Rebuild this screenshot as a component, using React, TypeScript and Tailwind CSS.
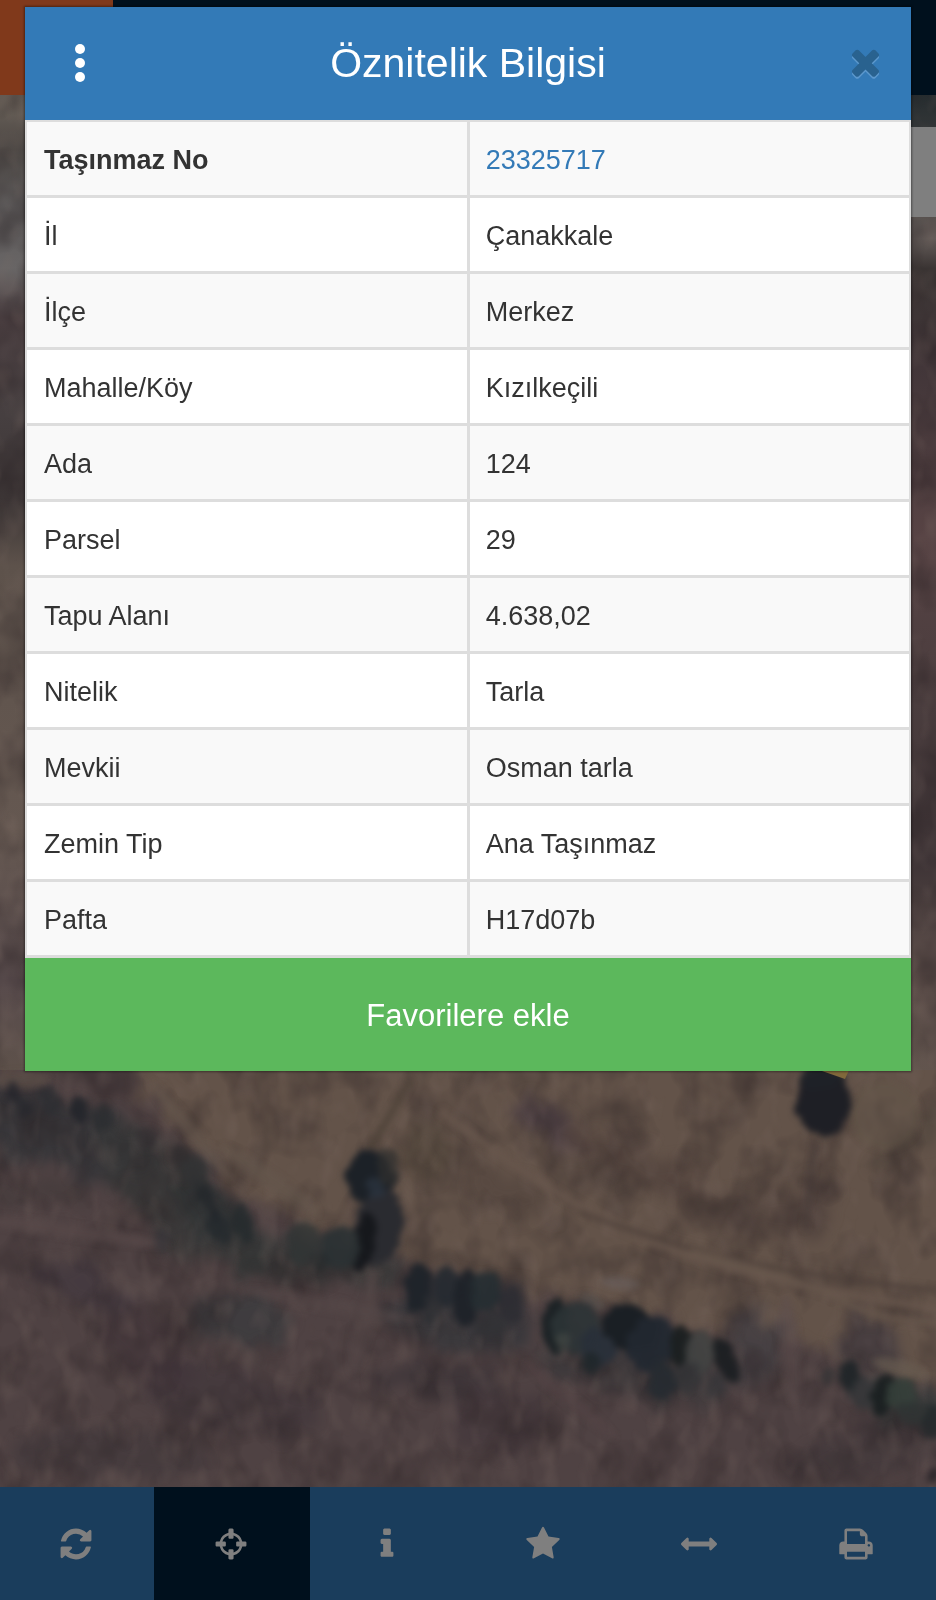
const rows: [string, string][] = [
  ["Taşınmaz No", "23325717"],
  ["İl", "Çanakkale"],
  ["İlçe", "Merkez"],
  ["Mahalle/Köy", "Kızılkeçili"],
  ["Ada", "124"],
  ["Parsel", "29"],
  ["Tapu Alanı", "4.638,02"],
  ["Nitelik", "Tarla"],
  ["Mevkii", "Osman tarla"],
  ["Zemin Tip", "Ana Taşınmaz"],
  ["Pafta", "H17d07b"],
];

const tools = [
  {
    label: "Yenile",
    d: "M1639 1056q0 5-1 7-64 268-268 434.5t-478 166.5q-146 0-282.5-55t-243.5-157l-129 129q-19 19-45 19t-45-19-19-45v-448q0-26 19-45t45-19h448q26 0 45 19t19 45-19 45l-137 137q71 66 161 102t187 36q134 0 250-65t186-179q11-17 53-117 8-23 30-23h192q13 0 22.5 9.5t9.5 22.5zm25-800v448q0 26-19 45t-45 19h-448q-26 0-45-19t-19-45 19-45l138-138q-148-137-349-137-134 0-250 65t-186 179q-11 17-53 117-8 23-30 23h-199q-13 0-22.5-9.5t-9.5-22.5v-7q65-268 270-434.5t480-166.5q146 0 284 55.5t245 156.5l130-129q19-19 45-19t45 19 19 45z",
  },
  {
    label: "Konum",
    active: true,
    d: "M1325 1024h-109q-26 0-45-19t-19-45v-128q0-26 19-45t45-19h109q-32-108-112.5-188.5t-188.5-112.5v109q0 26-19 45t-45 19h-128q-26 0-45-19t-19-45v-109q-108 32-188.5 112.5t-112.5 188.5h109q26 0 45 19t19 45v128q0 26-19 45t-45 19h-109q32 108 112.5 188.5t188.5 112.5v-109q0-26 19-45t45-19h128q26 0 45 19t19 45v109q108-32 188.5-112.5t112.5-188.5zm339-192v128q0 26-19 45t-45 19h-143q-37 161-154.5 278.5t-278.5 154.5v143q0 26-19 45t-45 19h-128q-26 0-45-19t-19-45v-143q-161-37-278.5-154.5t-154.5-278.5h-143q-26 0-45-19t-19-45v-128q0-26 19-45t45-19h143q37-161 154.5-278.5t278.5-154.5v-143q0-26 19-45t45-19h128q26 0 45 19t19 45v143q161 37 278.5 154.5t154.5 278.5h143q26 0 45 19t19 45z",
  },
  {
    label: "Bilgi",
    d: "M1216 1344v128q0 26-19 45t-45 19h-512q-26 0-45-19t-19-45v-128q0-26 19-45t45-19h64v-384h-64q-26 0-45-19t-19-45v-128q0-26 19-45t45-19h384q26 0 45 19t19 45v576h64q26 0 45 19t19 45zm-128-1152v192q0 26-19 45t-45 19h-256q-26 0-45-19t-19-45v-192q0-26 19-45t45-19h256q26 0 45 19t19 45z",
  },
  {
    label: "Favoriler",
    d: "M1728 647q0 22-26 48l-363 354 86 500q1 7 1 20 0 21-10.5 35.5t-30.5 14.5q-19 0-40-12l-449-236-449 236q-22 12-40 12-21 0-31.5-14.5t-10.5-35.5q0-6 2-20l86-500-364-354q-25-27-25-48 0-37 56-46l502-73 225-455q19-41 49-41t49 41l225 455 502 73q56 9 56 46z",
  },
  {
    label: "Ölçüm",
    d: "M1792 896q0 26-19 45l-256 256q-19 19-45 19t-45-19-19-45v-128h-1024v128q0 26-19 45t-45 19-45-19l-256-256q-19-19-19-45t19-45l256-256q19-19 45-19t45 19 19 45v128h1024v-128q0-26 19-45t45-19 45 19l256 256q19 19 19 45z",
  },
  {
    label: "Yazdır",
    d: "M448 1536h896v-256h-896v256zm0-640h896v-384h-160q-40 0-68-28t-28-68v-160h-640v640zm1152 64q0-26-19-45t-45-19-45 19-19 45 19 45 45 19 45-19 19-45zm128 0v416q0 13-9.5 22.5t-22.5 9.5h-224v160q0 40-28 68t-68 28h-960q-40 0-68-28t-28-68v-160h-224q-13 0-22.5-9.5t-9.5-22.5v-416q0-79 56.5-135.5t135.5-56.5h64v-544q0-40 28-68t68-28h672q40 0 88 20t76 48l152 152q28 28 48 76t20 88v256h64q79 0 135.5 56.5t56.5 135.5z",
  },
];

const closePath =
  "M1490 1290q0 40-28 68l-136 136q-28 28-68 28t-68-28l-294-294-294 294q-28 28-68 28t-68-28l-136-136q-28-28-28-68t28-68l294-294-294-294q-28-28-28-68t28-68l136-136q28-28 68-28t68 28l294 294 294-294q28-28 68-28t68 28l136 136q28 28 28 68t-28 68l-294 294 294 294q28 28 28 68z";

type Blob = [number, number, number, number, number, string, number];

// cx, cy, rx, ry, rotation, colour, opacity
const shade: Blob[] = [
  [50, 1130, 110, 36, 18, "#353539", 0.9],
  [165, 1185, 85, 36, 40, "#383839", 0.9],
  [225, 1225, 60, 24, 45, "#313436", 0.8],
  [280, 1258, 125, 24, 8, "#3a3939", 0.85],
  [240, 1320, 50, 28, 10, "#3a3b3d", 0.75],
  [90, 1290, 60, 20, 25, "#41383e", 0.7],
  [150, 1350, 50, 35, 20, "#42363a", 0.6],
  [230, 1400, 90, 30, 10, "#40363a", 0.6],
  [110, 1455, 100, 22, 5, "#3f373a", 0.6],
  [460, 1325, 70, 28, 8, "#37373b", 0.85],
  [500, 1310, 34, 28, 10, "#39373b", 0.8],
  [440, 1380, 70, 18, 8, "#3c3438", 0.75],
  [640, 1370, 105, 28, 8, "#3a373a", 0.8],
  [755, 1350, 28, 38, 10, "#453f43", 0.9],
  [868, 1345, 26, 28, 0, "#453d41", 0.85],
  [550, 1125, 48, 16, 30, "#4c3f44", 0.9],
  [905, 1405, 45, 24, 20, "#3a3c3c", 0.85],
  [815, 1208, 10, 36, 5, "#4d403c", 0.8],
  [660, 1175, 110, 20, 25, "#53443d", 0.8],
  [760, 1215, 80, 22, 5, "#53453e", 0.7],
  [500, 1190, 50, 20, 25, "#54463e", 0.7],
  [910, 1140, 50, 10, -35, "#4f443c", 0.7],
  [430, 1150, 20, 30, 0, "#53473c", 0.7],
  [20, 1190, 70, 14, 0, "#433a3b", 0.6],
  [870, 1450, 80, 25, -15, "#41373b", 0.65],
  [500, 1420, 50, 30, 0, "#41363a", 0.6],
];

const trees: Blob[] = [
  [369, 1177, 25, 27, 0, "#1c2127", 1],
  [379, 1227, 24, 40, 8, "#2a2b30", 1],
  [364, 1242, 10, 30, 8, "#15171b", 0.95],
  [389, 1168, 10, 18, 0, "#31302f", 0.7],
  [375, 1187, 9, 13, 0, "#2b333e", 0.8],
  [340, 1247, 20, 22, 20, "#2a3133", 0.9],
  [303, 1242, 16, 22, 10, "#2f3435", 0.8],
  [320, 1260, 8, 10, 0, "#252a2b", 0.6],
  [253, 1265, 12, 10, 0, "#303132", 0.5],
  [207, 1200, 8, 26, -30, "#23272a", 0.8],
  [195, 1172, 14, 18, -20, "#303233", 0.7],
  [220, 1227, 10, 18, -25, "#23282c", 0.75],
  [243, 1224, 10, 20, -15, "#23292c", 0.75],
  [180, 1154, 10, 10, 20, "#2d2c2e", 0.7],
  [148, 1138, 9, 11, 20, "#302c2f", 0.6],
  [102, 1120, 10, 14, 10, "#292c30", 0.65],
  [79, 1110, 9, 12, 0, "#22242a", 0.85],
  [50, 1100, 10, 15, 0, "#2a2b30", 0.65],
  [24, 1108, 7, 11, -20, "#25272c", 0.7],
  [13, 1093, 8, 10, 0, "#212329", 0.75],
  [162, 1240, 8, 12, 0, "#353438", 0.6],
  [419, 1287, 13, 25, 5, "#1e2329", 0.95],
  [432, 1307, 9, 16, 0, "#2b2e32", 0.7],
  [447, 1286, 13, 19, 0, "#242930", 0.9],
  [466, 1298, 12, 29, 5, "#1d2228", 0.95],
  [485, 1292, 16, 20, 0, "#252d32", 0.9],
  [510, 1304, 12, 18, 0, "#2d2d32", 0.85],
  [491, 1325, 16, 12, 0, "#313236", 0.6],
  [556, 1327, 14, 29, 0, "#1c2225", 1],
  [576, 1327, 25, 24, 15, "#2c3436", 0.9],
  [563, 1342, 7, 12, 20, "#474b48", 0.6],
  [598, 1347, 20, 18, 35, "#28303a", 0.9],
  [591, 1362, 9, 11, 0, "#20272a", 0.85],
  [630, 1328, 29, 21, 15, "#1a1f24", 1],
  [651, 1344, 25, 28, 25, "#222830", 0.95],
  [662, 1380, 13, 20, 0, "#262b31", 0.9],
  [681, 1346, 11, 19, 5, "#1a1f20", 0.95],
  [700, 1352, 15, 20, 0, "#424443", 0.9],
  [687, 1377, 14, 15, 0, "#333537", 0.7],
  [726, 1360, 10, 26, -18, "#1b1f22", 0.95],
  [715, 1387, 12, 10, 0, "#353638", 0.6],
  [850, 1375, 10, 17, 0, "#202528", 0.95],
  [829, 1376, 8, 9, 0, "#343436", 0.7],
  [861, 1392, 14, 16, 0, "#323537", 0.8],
  [884, 1395, 13, 20, 10, "#1a2021", 0.95],
  [902, 1395, 17, 16, 10, "#353f3a", 0.9],
  [917, 1414, 20, 12, 10, "#2e3333", 0.8],
  [934, 1422, 10, 18, 10, "#25292c", 0.85],
  [823, 1104, 28, 33, 0, "#1e1f25", 1],
  [820, 1077, 20, 14, 0, "#1f2227", 0.95],
  [934, 1477, 7, 8, 0, "#242125", 0.8],
];

const light: Blob[] = [
  [190, 1130, 65, 7, 50, "#67594f", 0.7],
  [270, 1180, 60, 9, 35, "#66594f", 0.6],
  [20, 1080, 30, 9, 0, "#5c5048", 0.8],
  [60, 1230, 110, 7, 8, "#58494a", 0.75],
  [330, 1305, 90, 7, 10, "#574949", 0.6],
  [364, 1320, 10, 55, 12, "#57494a", 0.6],
  [790, 1350, 10, 55, -5, "#5d4f4f", 0.6],
  [900, 1368, 28, 8, 15, "#6b6054", 0.7],
  [620, 1283, 20, 6, 5, "#696061", 0.6],
  [592, 1302, 14, 7, 30, "#5c5855", 0.6],
  [885, 1115, 35, 35, 0, "#625549", 0.7],
  [570, 1400, 60, 6, 40, "#554546", 0.6],
];

function Blobs({ items }: { items: Blob[] }) {
  return (
    <>
      {items.map(([cx, cy, rx, ry, angle, fill, opacity], i) => (
        <ellipse
          key={i}
          cx={cx}
          cy={cy}
          rx={rx}
          ry={ry}
          fill={fill}
          opacity={opacity}
          transform={`rotate(${angle} ${cx} ${cy})`}
        />
      ))}
    </>
  );
}

function SatelliteMap() {
  return (
    <svg
      aria-hidden="true"
      viewBox="0 0 936 1600"
      preserveAspectRatio="none"
      colorInterpolationFilters="sRGB"
      className="absolute inset-0 size-full"
    >
      <defs>
        <filter id="blur-wide" x="-20%" y="-20%" width="140%" height="140%">
          <feTurbulence type="fractalNoise" baseFrequency="0.04" numOctaves="3" seed="9" result="n" />
          <feDisplacementMap in="SourceGraphic" in2="n" scale="50" xChannelSelector="R" yChannelSelector="G" />
          <feGaussianBlur stdDeviation="6" />
        </filter>
        <filter id="blur-line" x="-20%" y="-20%" width="140%" height="140%">
          <feGaussianBlur stdDeviation="3" />
        </filter>
        <filter id="tree-edge" x="-5%" y="-5%" width="110%" height="110%">
          <feTurbulence type="fractalNoise" baseFrequency="0.07" numOctaves="2" seed="4" result="n" />
          <feDisplacementMap in="SourceGraphic" in2="n" scale="12" xChannelSelector="R" yChannelSelector="G" />
          <feGaussianBlur stdDeviation="3" />
        </filter>
        <filter id="grain" x="0" y="0" width="100%" height="100%">
          <feTurbulence type="fractalNoise" baseFrequency="0.025 0.02" numOctaves="3" seed="11" />
          <feColorMatrix values="0 0 0 0 0.14  0 0 0 0 0.11  0 0 0 0 0.12  2 0 0 0 -0.8" />
        </filter>
        <filter id="glints" x="0" y="0" width="100%" height="100%">
          <feTurbulence type="fractalNoise" baseFrequency="0.05 0.03" numOctaves="2" seed="23" />
          <feColorMatrix values="0 0 0 0 0.52  0 0 0 0 0.45  0 0 0 0 0.42  0 2.2 0 0 -1.05" />
        </filter>
        <linearGradient id="left-edge" x1="0" y1="90" x2="0" y2="1080" gradientUnits="userSpaceOnUse">
          <stop offset="0" stopColor="#6f665d" />
          <stop offset="0.06" stopColor="#4c4744" />
          <stop offset="0.12" stopColor="#5e5b5b" />
          <stop offset="0.18" stopColor="#686565" />
          <stop offset="0.23" stopColor="#4e4244" />
          <stop offset="0.33" stopColor="#463f40" />
          <stop offset="0.42" stopColor="#3d3636" />
          <stop offset="0.48" stopColor="#5d524b" />
          <stop offset="0.75" stopColor="#655851" />
          <stop offset="0.9" stopColor="#584b4c" />
          <stop offset="1" stopColor="#5e524a" />
        </linearGradient>
        <linearGradient id="right-edge" x1="0" y1="90" x2="0" y2="1080" gradientUnits="userSpaceOnUse">
          <stop offset="0" stopColor="#252c2f" />
          <stop offset="0.11" stopColor="#4b4745" />
          <stop offset="0.15" stopColor="#645c59" />
          <stop offset="0.18" stopColor="#3a3433" />
          <stop offset="0.28" stopColor="#423639" />
          <stop offset="0.45" stopColor="#574344" />
          <stop offset="0.62" stopColor="#4a3d3e" />
          <stop offset="0.78" stopColor="#3e3436" />
          <stop offset="0.9" stopColor="#60514c" />
          <stop offset="1" stopColor="#62554e" />
        </linearGradient>
      </defs>
      <rect width="936" height="1600" fill="#635349" />
      <path
        d="M-60 1060H120L175 1130L230 1190L320 1235L400 1265L520 1290L690 1330L800 1345L1000 1410V1660H-60Z"
        fill="#4f4243"
        filter="url(#blur-wide)"
      />
      <g filter="url(#blur-wide)">
        <Blobs items={shade} />
      </g>
      <rect y="90" width="30" height="980" fill="url(#left-edge)" />
      <rect x="905" y="90" width="31" height="980" fill="url(#right-edge)" />
      <rect width="936" height="1600" filter="url(#grain)" opacity="0.42" />
      <rect width="936" height="1600" filter="url(#glints)" opacity="0.25" />
      <g filter="url(#blur-line)" opacity="0.85">
        <Blobs items={light} />
        <g fill="none">
          <path d="M440 1110Q560 1205 660 1245T936 1308" stroke="#68574d" strokeWidth="7" />
          <path d="M580 1212Q680 1250 760 1265T936 1290" stroke="#4d403a" strokeWidth="5" />
          <path d="M690 1252Q790 1275 840 1300T936 1322" stroke="#68584d" strokeWidth="6" />
          <path d="M370 1150L410 1080" stroke="#4d4238" strokeWidth="6" />
          <path d="M815 1140L805 1230" stroke="#453a38" strokeWidth="4" />
        </g>
      </g>
      <g filter="url(#tree-edge)">
        <Blobs items={trees} />
      </g>
      <path d="M822 1071L845 1079L850 1068H815Z" fill="#80683b" />
      <rect x="905" y="127" width="31" height="90" fill="#7f7f7f" />
    </svg>
  );
}

function Icon({ d, className }: { d: string; className: string }) {
  return (
    <svg viewBox="0 0 1792 1792" fill="currentColor" aria-hidden="true" className={className}>
      <path d={d} />
    </svg>
  );
}

export default function App() {
  return (
    <div className="relative isolate flex min-h-screen flex-col overflow-hidden bg-[#4b3e41] font-['Liberation_Sans',Arial,sans-serif]">
      <div className="absolute inset-0 -z-10">
        <SatelliteMap />
        <div className="absolute inset-x-0 top-0 flex h-[95px] bg-[#00101d]">
          <div className="w-[113px] bg-[#80391b]" />
        </div>
      </div>

      <section
        role="dialog"
        aria-labelledby="dialog-title"
        className="mx-[25px] mt-[7px] mb-8 bg-white shadow-[0_0_2px_1px_rgba(0,0,0,0.4)]"
      >
        <header className="grid h-[113px] grid-cols-[1fr_auto_1fr] items-center bg-[#337ab7] px-6 pb-0.5 text-white">
          <button
            type="button"
            aria-label="Menü"
            className="flex h-12 w-[62px] items-center justify-center justify-self-start"
          >
            <svg viewBox="0 0 10 38" fill="currentColor" className="h-[38px] w-[10px]">
              <circle cx="5" cy="5" r="5" />
              <circle cx="5" cy="19" r="5" />
              <circle cx="5" cy="33" r="5" />
            </svg>
          </button>
          <h1 id="dialog-title" className="text-[41px] leading-12">
            Öznitelik Bilgisi
          </h1>
          <button
            type="button"
            aria-label="Kapat"
            className="flex h-12 w-11 items-center justify-center justify-self-end text-[#29628f]"
          >
            <Icon d={closePath} className="size-[41px] shrink-0 drop-shadow-[0_2px_0_#5c98cd]" />
          </button>
        </header>

        <table className="w-full table-fixed border-separate border-spacing-0 border-x-2 border-t-2 border-[#dddddd] text-[27px] leading-9 text-[#333333]">
          <colgroup>
            <col className="w-[50.2%]" />
            <col />
          </colgroup>
          <tbody>
            {rows.map(([name, value], i) => (
              <tr key={name} className="h-[76px] odd:bg-[#f9f9f9] even:bg-white">
                <th
                  scope="row"
                  className={`border-r-3 border-b-3 border-[#dddddd] px-[17px] pt-0.5 text-left ${
                    i === 0 ? "font-bold" : "font-normal"
                  }`}
                >
                  {name}
                </th>
                <td className="border-b-3 border-[#dddddd] px-4 pt-0.5">
                  {i === 0 ? (
                    <a href="#tasinmaz" className="text-[#337ab7]">
                      {value}
                    </a>
                  ) : (
                    value
                  )}
                </td>
              </tr>
            ))}
          </tbody>
        </table>

        <button type="button" className="block h-[113px] w-full bg-[#5cb85c] pt-1 text-[31px] text-white">
          Favorilere ekle
        </button>
      </section>

      <nav
        aria-label="Harita araçları"
        className="mt-auto grid h-[113px] grid-cols-[154fr_156fr_156fr_156fr_156fr_158fr] bg-[#1a3d5c]"
      >
        {tools.map((tool) => (
          <button
            key={tool.label}
            type="button"
            aria-label={tool.label}
            className={`flex items-center justify-center pr-0.5 text-[#7f7f7f] ${tool.active ? "bg-[#00101d]" : ""}`}
          >
            <Icon d={tool.d} className="size-9" />
          </button>
        ))}
      </nav>
    </div>
  );
}
